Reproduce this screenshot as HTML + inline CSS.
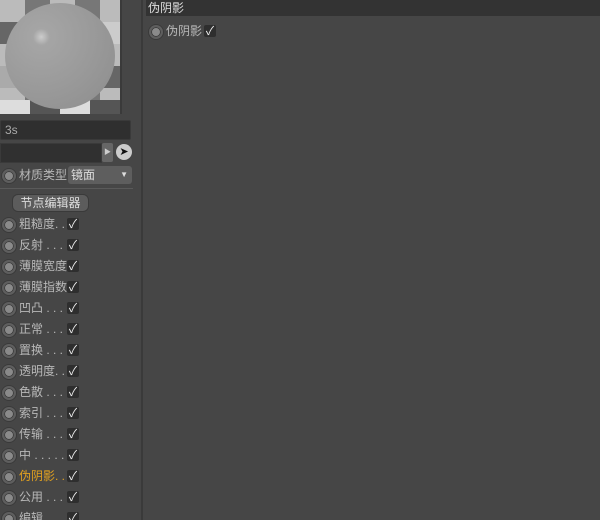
<!DOCTYPE html><html><head><style>
html,body{margin:0;width:600px;height:520px;overflow:hidden}
body{background:#464646;position:relative;font-family:"Liberation Sans","Noto Sans CJK SC",sans-serif;font-size:12px;color:#b8b8b8}
.a{position:absolute}
.rad{position:absolute;width:10px;height:10px;border-radius:50%;border:2px solid #5e5e5e;background:#8a8a8a;box-shadow:0 0 0 1px #3a3a3a,inset 0 0 0 1px #3a3a3a}
.ck{position:absolute;width:12px;height:12px;background:#2e2e2e;border-radius:2px;color:#eee;font-size:12px;line-height:12px;text-align:center}
</style></head><body>
<div class="a" style="left:0;top:0;width:121px;height:114px;background:repeating-linear-gradient(90deg,#bbb 0 25px,#777 25px 50px);"></div>
<div class="a" style="left:0;top:22px;width:121px;height:22px;background:repeating-linear-gradient(90deg,#666 0 30px,#ccc 30px 60px)"></div>
<div class="a" style="left:0;top:66px;width:121px;height:22px;background:repeating-linear-gradient(90deg,#aaa 0 30px,#666 30px 60px)"></div>
<div class="a" style="left:0;top:100px;width:121px;height:14px;background:repeating-linear-gradient(90deg,#ddd 0 30px,#555 30px 60px)"></div>
<div class="a" style="left:5px;top:3px;width:110px;height:106px;border-radius:50%;background:radial-gradient(circle at 33% 32%,#ccc 0,#a5a5a5 8%,#9a9a9a 50%,#8c8c8c 100%)"></div>
<div class="a" style="left:120px;top:0;width:2px;height:114px;background:#3a3a3a"></div>
<div class="a" style="left:141px;top:0;width:2px;height:520px;background:#3a3a3a"></div>
<div class="a" style="left:146px;top:0;width:454px;height:16px;background:#333;color:#ddd;line-height:16px;padding-left:2px">伪阴影</div>
<div class="rad" style="left:149px;top:25px"></div>
<div class="a" style="left:166px;top:23px;line-height:16px">伪阴影</div>
<div class="ck" style="left:204px;top:25px">✓</div>
<div class="a" style="left:0;top:120px;width:125px;height:18px;background:#2f2f2f;border:1px solid #3a3a3a;border-radius:2px;line-height:18px;padding-left:4px;color:#aaa">3s</div>
<div class="a" style="left:0;top:143px;width:100px;height:18px;background:#303030;border:1px solid #3a3a3a"></div>
<div class="a" style="left:102px;top:143px;width:11px;height:19px;background:#666;border-radius:2px;color:#ccc;font-size:7px;line-height:19px;text-align:center">▶</div>
<div class="a" style="left:116px;top:144px;width:16px;height:16px;border-radius:50%;background:#ccc;color:#111;font-size:11px;line-height:16px;text-align:center">➤</div>
<div class="rad" style="left:2px;top:169px"></div>
<div class="a" style="left:19px;top:166px;line-height:18px">材质类型</div>
<div class="a" style="left:68px;top:166px;width:64px;height:18px;background:#5e5e5e;border-radius:3px;line-height:18px;color:#ddd;padding-left:3px;box-sizing:border-box">镜面<span style="position:absolute;right:4px;font-size:8px">▼</span></div>
<div class="a" style="left:0;top:188px;width:133px;height:1px;background:#5a5a5a"></div>
<div class="a" style="left:12px;top:194px;width:77px;height:18px;background:#5c5c5c;border:1px solid #3a3a3a;border-radius:6px;text-align:center;line-height:16px;color:#ddd;box-sizing:border-box">节点编辑器</div>
<div id="rows"></div>
<script>
var t=["粗糙度. .","反射 . . .","薄膜宽度","薄膜指数","凹凸 . . .","正常 . . .","置换 . . .","透明度. .","色散 . . .","索引 . . .","传输 . . .","中 . . . . .","伪阴影. .","公用 . . .","编辑"];
var h="";for(var i=0;i<t.length;i++){var y=214+i*21;
h+='<div class="rad" style="left:2px;top:'+(y+4)+'px"></div><div class="a" style="left:19px;top:'+y+'px;line-height:20px;white-space:pre;'+(i==12?'color:#e0a020':'')+'">'+t[i]+'</div><div class="ck" style="left:67px;top:'+(y+4)+'px">✓</div>';}
document.getElementById("rows").innerHTML=h;
</script>
</body></html>
